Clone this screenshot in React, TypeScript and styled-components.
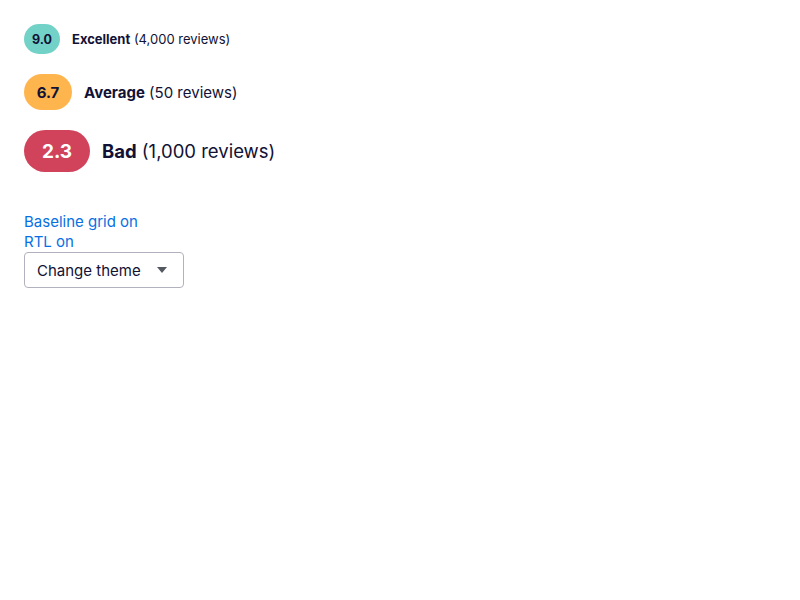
import React from "react";
import styled, { createGlobalStyle } from "styled-components";

const GlobalStyle = createGlobalStyle`
  body {
    margin: 0;
    background: #fff;
    font-family: "Inter", "Noto Sans", sans-serif;
    color: #111236;
  }
`;

const Page = styled.div`
  padding: 24px;
  display: flex;
  flex-direction: column;
`;

const Ratings = styled.div`
  display: flex;
  flex-direction: column;
  gap: 20px;
`;

type Size = "sm" | "md" | "lg";

const sizes = {
  sm: { w: 36, h: 30, font: 13, badgeFont: 12.5 },
  md: { w: 48, h: 36, font: 15, badgeFont: 15 },
  lg: { w: 66, h: 42, font: 18.5, badgeFont: 19 },
};

const Row = styled.div<{ $size: Size }>`
  display: flex;
  align-items: center;
  gap: 12px;
  font-size: ${(p) => sizes[p.$size].font}px;
`;

const Badge = styled.div<{ $size: Size; $bg: string; $light?: boolean }>`
  width: ${(p) => sizes[p.$size].w}px;
  height: ${(p) => sizes[p.$size].h}px;
  border-radius: ${(p) => sizes[p.$size].h / 2}px;
  background: ${(p) => p.$bg};
  color: ${(p) => (p.$light ? "#fff" : "#111236")};
  font-size: ${(p) => sizes[p.$size].badgeFont}px;
  display: flex;
  align-items: center;
  justify-content: center;
  font-weight: 700;
`;

const Label = styled.span`
  font-weight: 700;
`;

const Count = styled.span`
  font-weight: 400;
`;

const Controls = styled.div`
  margin-top: 40px;
  display: flex;
  flex-direction: column;
  align-items: flex-start;
`;

const LinkButton = styled.button`
  background: none;
  border: none;
  padding: 0;
  font-family: inherit;
  font-size: 15px;
  line-height: 20px;
  color: #0770e3;
  cursor: pointer;
`;

const SelectBox = styled.div`
  width: 160px;
  height: 36px;
  box-sizing: border-box;
  border: 1px solid #b2b2bf;
  border-radius: 4px;
  display: flex;
  align-items: center;
  justify-content: space-between;
  padding: 0 16px 0 12px;
  font-size: 15px;
  color: #111236;
`;

const ratings = [
  { score: "9.0", label: "Excellent", count: "(4,000 reviews)", size: "sm" as Size, bg: "#72d2c7" },
  { score: "6.7", label: "Average", count: "(50 reviews)", size: "md" as Size, bg: "#ffb54d" },
  { score: "2.3", label: "Bad", count: "(1,000 reviews)", size: "lg" as Size, bg: "#d1435b", light: true },
];

export default function App() {
  return (
    <>
      <GlobalStyle />
      <Page>
        <Ratings>
          {ratings.map((r) => (
            <Row key={r.score} $size={r.size}>
              <Badge $size={r.size} $bg={r.bg} $light={r.light}>
                {r.score}
              </Badge>
              <span>
                <Label>{r.label}</Label> <Count>{r.count}</Count>
              </span>
            </Row>
          ))}
        </Ratings>
        <Controls>
          <LinkButton>Baseline grid on</LinkButton>
          <LinkButton>RTL on</LinkButton>
          <SelectBox>
            Change theme
            <svg width="10" height="6" viewBox="0 0 10 6">
              <path d="M0 0h10L5 6z" fill="#545860" />
            </svg>
          </SelectBox>
        </Controls>
      </Page>
    </>
  );
}
